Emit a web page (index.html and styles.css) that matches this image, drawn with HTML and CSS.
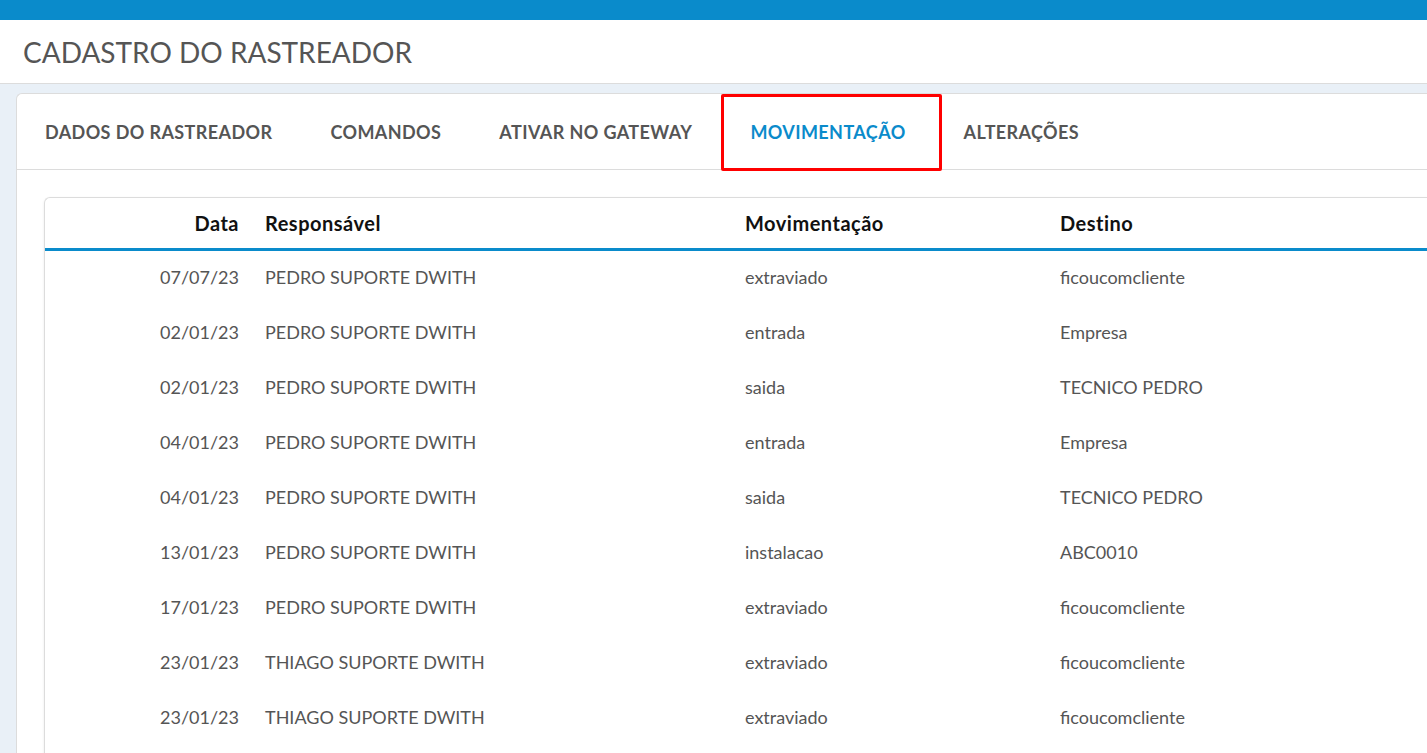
FILE: index.html
```html
<!DOCTYPE html>
<html lang="pt-BR">
<head>
<meta charset="UTF-8">
<title>Cadastro do Rastreador</title>
<meta name="viewport" content="width=device-width, initial-scale=1">
<link rel="stylesheet" href="styles.css">
</head>
<body>

<div class="topbar"></div>

<div class="page-header">
<h1>CADASTRO DO RASTREADOR</h1>
</div>

<div class="main">
<div class="card">

<div class="tabs">
<a class="tab">DADOS DO RASTREADOR</a>
<a class="tab">COMANDOS</a>
<a class="tab">ATIVAR NO GATEWAY</a>
<a class="tab active">MOVIMENTAÇÃO</a>
<a class="tab">ALTERAÇÕES</a>
</div>

<div class="card-body">
<div class="grid-box">
<table class="grid">
<thead>
<tr>
<th class="col-data">Data</th>
<th class="col-resp">Responsável</th>
<th class="col-mov">Movimentação</th>
<th>Destino</th>
</tr>
</thead>
<tbody>
<tr><td class="col-data">07/07/23</td><td>PEDRO SUPORTE DWITH</td><td>extraviado</td><td>ficoucomcliente</td></tr>
<tr><td class="col-data">02/01/23</td><td>PEDRO SUPORTE DWITH</td><td>entrada</td><td>Empresa</td></tr>
<tr><td class="col-data">02/01/23</td><td>PEDRO SUPORTE DWITH</td><td>saida</td><td>TECNICO PEDRO</td></tr>
<tr><td class="col-data">04/01/23</td><td>PEDRO SUPORTE DWITH</td><td>entrada</td><td>Empresa</td></tr>
<tr><td class="col-data">04/01/23</td><td>PEDRO SUPORTE DWITH</td><td>saida</td><td>TECNICO PEDRO</td></tr>
<tr><td class="col-data">13/01/23</td><td>PEDRO SUPORTE DWITH</td><td>instalacao</td><td>ABC0010</td></tr>
<tr><td class="col-data">17/01/23</td><td>PEDRO SUPORTE DWITH</td><td>extraviado</td><td>ficoucomcliente</td></tr>
<tr><td class="col-data">23/01/23</td><td>THIAGO SUPORTE DWITH</td><td>extraviado</td><td>ficoucomcliente</td></tr>
<tr><td class="col-data">23/01/23</td><td>THIAGO SUPORTE DWITH</td><td>extraviado</td><td>ficoucomcliente</td></tr>
</tbody>
</table>
</div>
</div>

</div>
</div>

</body>
</html>
```

FILE: styles.css
```css
body{
margin:0;
background:#e9f0f7;
font-family:Lato,"Liberation Sans",sans-serif;
color:#555;
overflow:hidden;
}

.topbar{
height:20px;
background:#0a8bcb;
}

.page-header{
background:#fff;
height:63px;
border-bottom:1px solid #dcdcdc;
display:flex;
align-items:center;
padding-left:23px;
}

.page-header h1{
margin:0;
font-size:28px;
font-weight:normal;
color:#555;
}

.main{
padding:9px 0 0 16px;
}

.card{
background:#fff;
border:1px solid #dcdcdc;
border-right:none;
border-radius:6px 0 0 0;
}

/* tab strip */
.tabs{
display:flex;
height:75px;
border-bottom:1px solid #dcdcdc;
}

.tab{
display:flex;
align-items:center;
padding:0 29px;
font-size:18px;
font-weight:bold;
letter-spacing:.4px;
color:#555;
position:relative;
}

.tab:first-child{
padding-left:28px;
}

.tab.active{
color:#0a8bcb;
}

.tab.active::after{
content:"";
position:absolute;
left:0;
right:-7px;
top:0;
bottom:-2px;
border:3px solid #f00;
border-radius:2px;
}

.card-body{
padding:27px 0 0 27px;
}

.grid-box{
border:1px solid #dcdcdc;
border-right:none;
border-radius:6px 0 0 0;
box-shadow:0 1px 3px rgba(0,0,0,.08);
padding-bottom:40px;
}

.grid{
width:100%;
border-collapse:collapse;
font-size:18px;
}

.grid th{
height:50px;
text-align:left;
color:#111;
font-size:20px;
font-weight:bold;
letter-spacing:.5px;
padding:0 13px;
border-bottom:3px solid #0a8bcb;
}

.grid td{
height:51px;
padding:0 13px 4px;
color:#555;
}

.grid .col-data{
width:181px;
text-align:right;
}

.grid .col-resp{
width:454px;
}

.grid .col-mov{
width:289px;
}
```
